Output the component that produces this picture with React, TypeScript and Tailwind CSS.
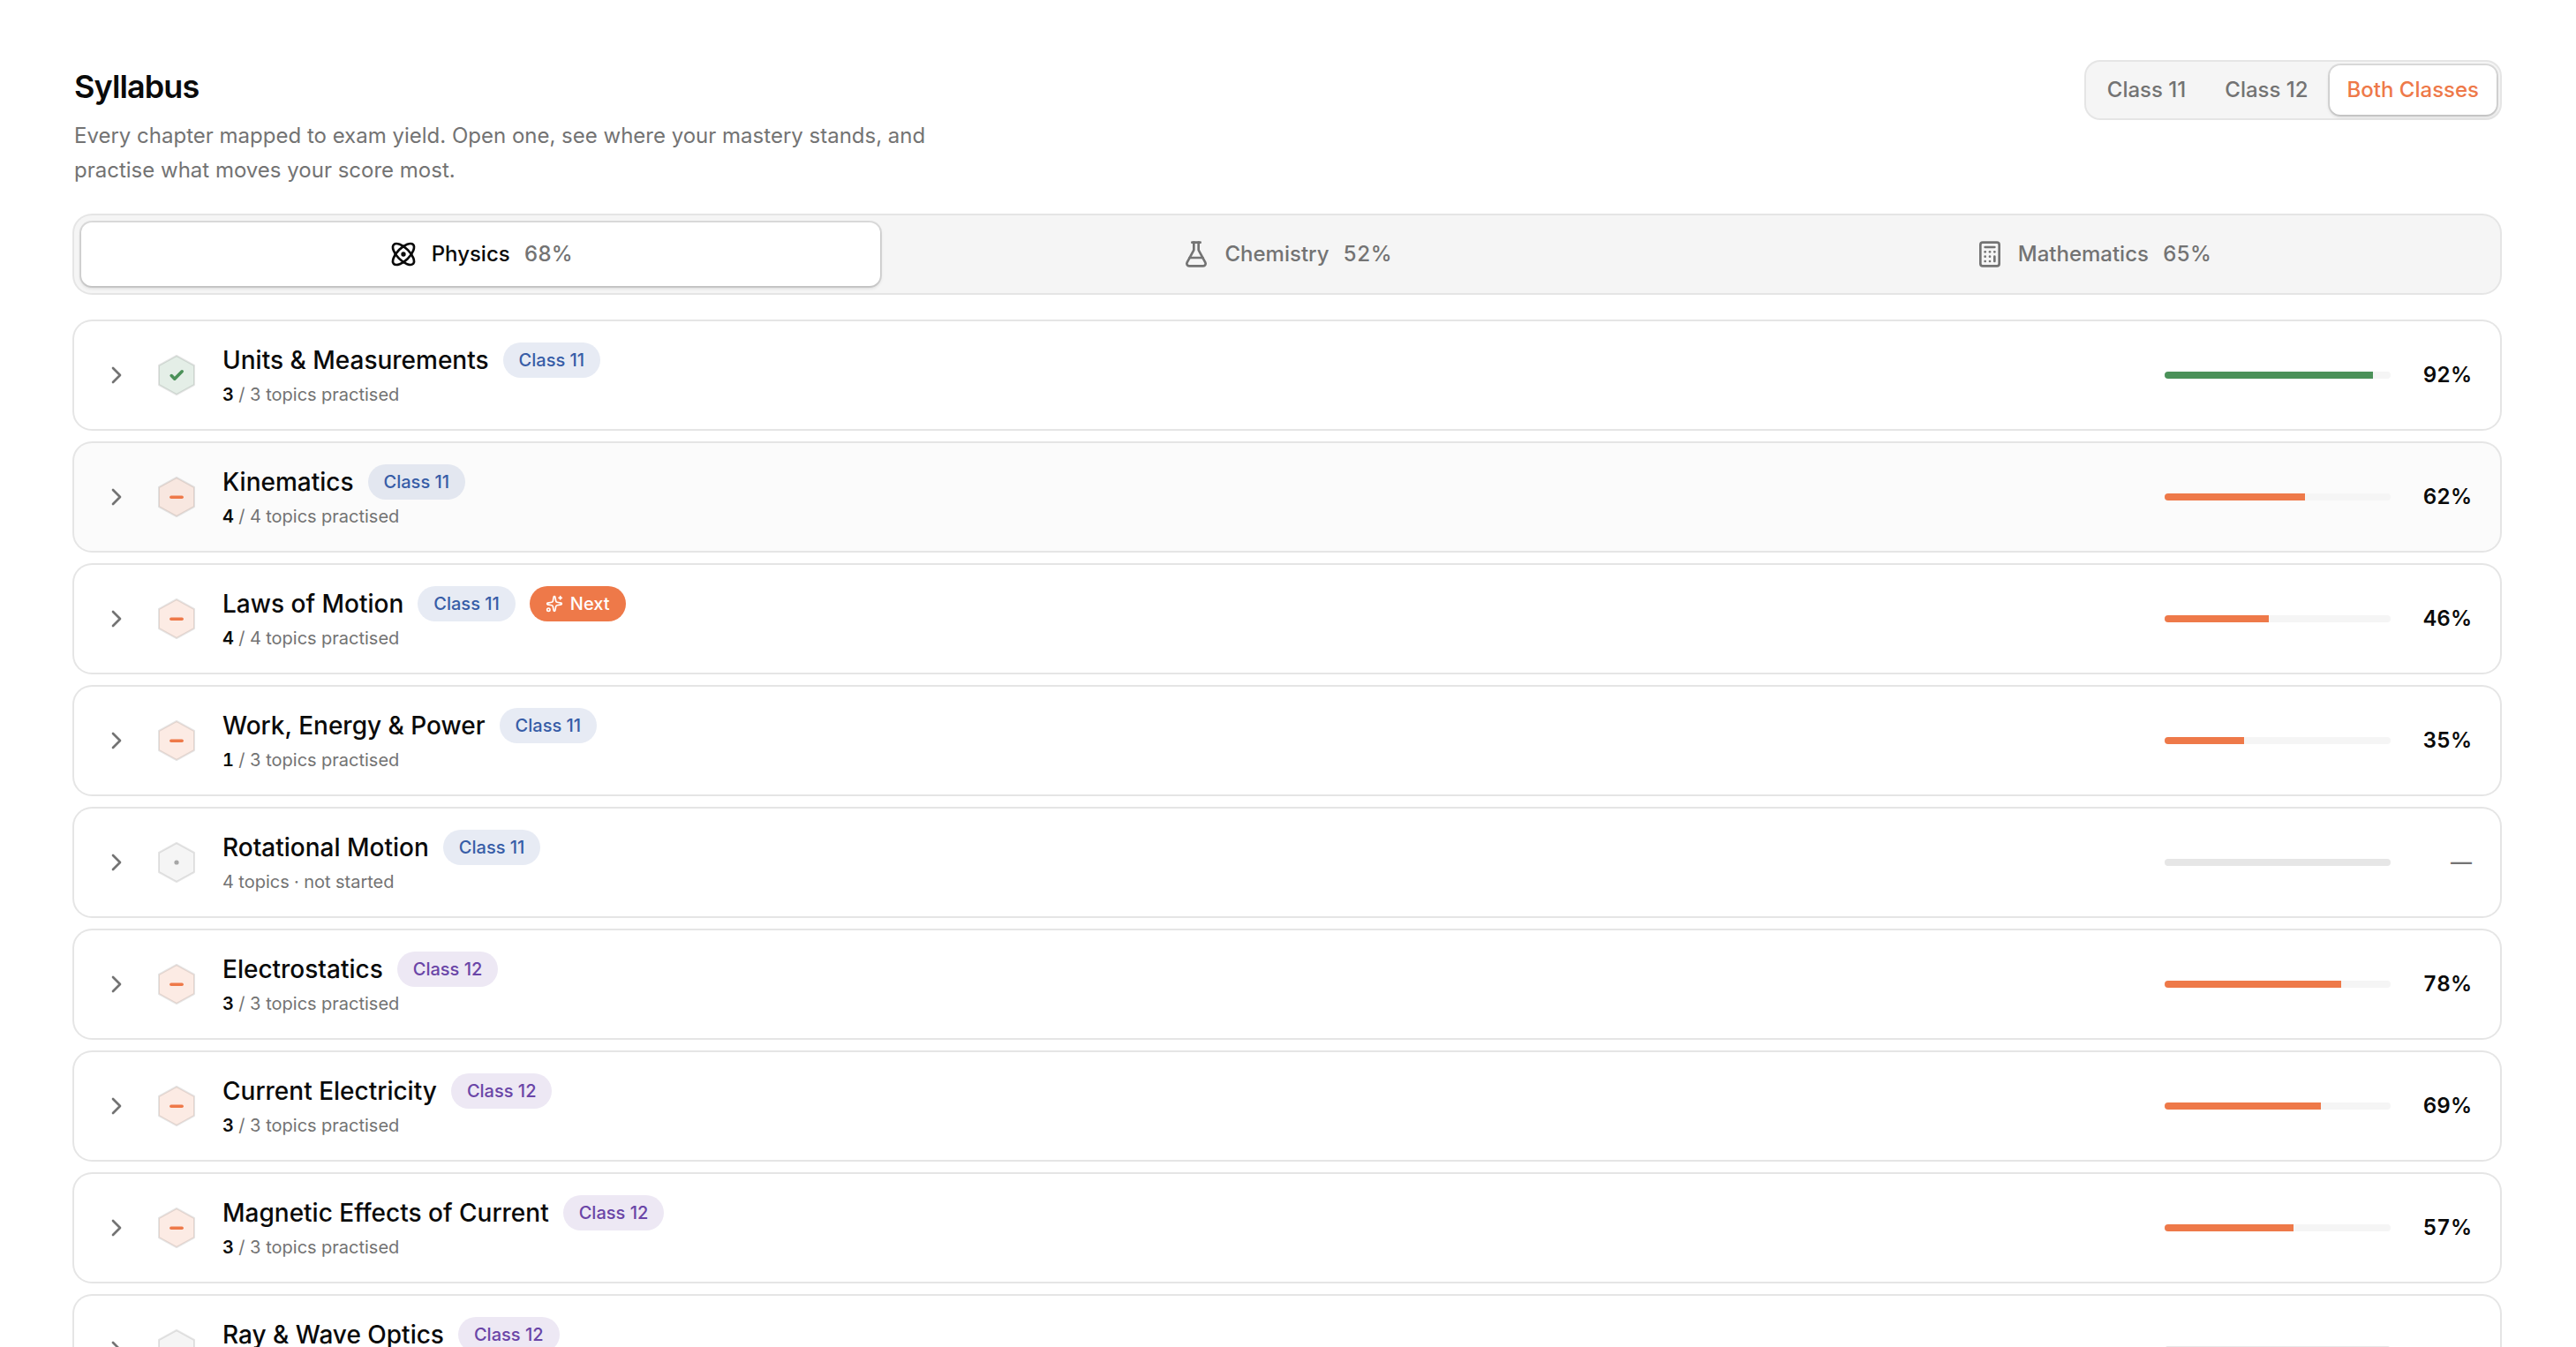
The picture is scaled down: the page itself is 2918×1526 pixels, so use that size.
import React, { useState } from 'react';
import { Atom, Calculator, ChevronRight, FlaskConical, Sparkles } from 'lucide-react';
import clsx from 'clsx';

type ClassFilter = 'Class 11' | 'Class 12' | 'Both Classes';

interface Chapter {
  name: string;
  grade: 11 | 12;
  practised: number;
  topics: number;
  mastery: number | null;
  next?: boolean;
  active?: boolean;
}

const filters: ClassFilter[] = ['Class 11', 'Class 12', 'Both Classes'];

const subjects = [
  { name: 'Physics', mastery: 68, icon: Atom },
  { name: 'Chemistry', mastery: 52, icon: FlaskConical },
  { name: 'Mathematics', mastery: 65, icon: Calculator },
];

const chapters: Chapter[] = [
  { name: 'Units & Measurements', grade: 11, practised: 3, topics: 3, mastery: 92 },
  { name: 'Kinematics', grade: 11, practised: 4, topics: 4, mastery: 62, active: true },
  { name: 'Laws of Motion', grade: 11, practised: 4, topics: 4, mastery: 46, next: true },
  { name: 'Work, Energy & Power', grade: 11, practised: 1, topics: 3, mastery: 35 },
  { name: 'Rotational Motion', grade: 11, practised: 0, topics: 4, mastery: null },
  { name: 'Electrostatics', grade: 12, practised: 3, topics: 3, mastery: 78 },
  { name: 'Current Electricity', grade: 12, practised: 3, topics: 3, mastery: 69 },
  { name: 'Magnetic Effects of Current', grade: 12, practised: 3, topics: 3, mastery: 57 },
  { name: 'Ray & Wave Optics', grade: 12, practised: 0, topics: 4, mastery: null },
];

const MASTERED = 80;

const StatusHex: React.FC<{ mastery: number | null }> = ({ mastery }) => {
  const mastered = mastery !== null && mastery >= MASTERED;
  return (
    <svg viewBox="0 0 24 24" fill="none" strokeLinecap="round" strokeLinejoin="round" className="size-12 shrink-0">
      <polygon
        points="12,1 22,6.5 22,17.5 12,23 2,17.5 2,6.5"
        strokeWidth="1"
        className={clsx(
          'stroke-black/10',
          mastery === null && 'fill-[#f5f5f5]',
          mastered && 'fill-[#4b8f5b]/15',
          mastery !== null && !mastered && 'fill-[#ee7949]/15'
        )}
      />
      {mastery === null && <circle cx="12" cy="12" r="1.3" className="fill-[#a6a6a6]" />}
      {mastered && <path d="M9.1 12.3 10.9 14.1 15.1 9.9" strokeWidth="1.8" className="stroke-[#4b9159]" />}
      {mastery !== null && !mastered && <path d="M8.9 12.1h6.2" strokeWidth="1.7" className="stroke-[#ee7949]" />}
    </svg>
  );
};

const ChapterRow: React.FC<{ chapter: Chapter }> = ({ chapter }) => {
  const { name, grade, practised, topics, mastery, next, active } = chapter;
  return (
    <div
      className={clsx(
        'flex items-center rounded-[20px] px-8 py-6 ring-2 ring-black/10',
        active ? 'bg-[#fbfbfb]' : 'bg-white'
      )}
    >
      <ChevronRight className="mr-7 size-8 shrink-0 text-[#737373]" />
      <StatusHex mastery={mastery} />
      <div className="ml-7 flex flex-1 flex-col gap-1">
        <div className="flex h-10 items-center gap-4">
          <span className="text-[28px] font-medium">{name}</span>
          <span
            className={clsx(
              'flex h-10 items-center rounded-full px-[18px] text-xl font-medium',
              grade === 11 ? 'bg-[#375da7]/12 text-[#375da7]' : 'bg-[#6a45a7]/12 text-[#6a45a7]'
            )}
          >
            Class {grade}
          </span>
          {next && (
            <span className="flex h-10 items-center gap-2 rounded-full bg-[#ee7949] px-[18px] text-xl font-medium text-white">
              <Sparkles className="size-5" />
              Next
            </span>
          )}
        </div>
        <div className="text-xl leading-[30px] text-[#737373] tabular-nums">
          {mastery === null ? (
            <>{topics} topics · not started</>
          ) : (
            <>
              <span className="font-semibold text-[#0a0a0a]">{practised}</span> / {topics} topics practised
            </>
          )}
        </div>
      </div>
      <div className={clsx('h-2 w-64 overflow-hidden rounded-full', mastery === null ? 'bg-[#e6e6e6]' : 'bg-[#f5f5f5]')}>
        {mastery !== null && (
          <div
            className={clsx('h-full', mastery >= MASTERED ? 'bg-[#4b9159]' : 'bg-[#ee7949]')}
            style={{ width: `${mastery}%` }}
          />
        )}
      </div>
      <div className="ml-7 w-16 text-right text-2xl font-semibold tabular-nums">
        {mastery === null ? <span className="font-medium text-[#737373]">—</span> : `${mastery}%`}
      </div>
    </div>
  );
};

const App: React.FC = () => {
  const [filter, setFilter] = useState<ClassFilter>('Both Classes');
  const [subject, setSubject] = useState('Physics');

  return (
    <div className="h-screen overflow-hidden bg-white pt-[70px] pr-[86px] pl-[84px] font-['Inter',sans-serif] text-[#0a0a0a] antialiased">
      <header className="flex items-start justify-between">
        <div className="flex flex-col gap-2">
          <h1 className="text-4xl leading-14 font-semibold tracking-tight">Syllabus</h1>
          <p className="max-w-[1024px] text-2xl leading-[39px] text-[#737373]">
            Every chapter mapped to exam yield. Open one, see where your mastery stands, and practise what moves your
            score most.
          </p>
        </div>
        <div className="flex gap-1 rounded-2xl bg-[#f5f5f5] p-1 ring-2 ring-black/10">
          {filters.map((f) => (
            <button
              key={f}
              onClick={() => setFilter(f)}
              className={clsx(
                'h-14 rounded-xl px-5 text-2xl font-medium',
                f === filter
                  ? 'bg-white text-[#ee7949] shadow-[0_0_0_2px_rgba(0,0,0,0.1),0_2px_4px_rgba(0,0,0,0.16)]'
                  : 'text-[#737373]'
              )}
            >
              {f}
            </button>
          ))}
        </div>
      </header>

      <div className="mt-8 grid grid-cols-3 gap-2 rounded-[20px] bg-[#f5f5f5] p-2 ring-2 ring-black/10">
        {subjects.map(({ name, mastery, icon: Icon }) => (
          <button
            key={name}
            onClick={() => setSubject(name)}
            className={clsx(
              'flex h-18 items-center justify-center gap-4 rounded-xl text-2xl font-medium',
              name === subject
                ? 'bg-white shadow-[0_0_0_2px_rgba(0,0,0,0.1),0_2px_4px_rgba(0,0,0,0.16)]'
                : 'text-[#737373]'
            )}
          >
            <Icon className="size-8" />
            {name}
            <span className="text-[#737373] tabular-nums">{mastery}%</span>
          </button>
        ))}
      </div>

      <div className="mt-8 flex flex-col gap-4">
        {chapters.map((chapter) => (
          <ChapterRow key={chapter.name} chapter={chapter} />
        ))}
      </div>
    </div>
  );
};

export default App;
